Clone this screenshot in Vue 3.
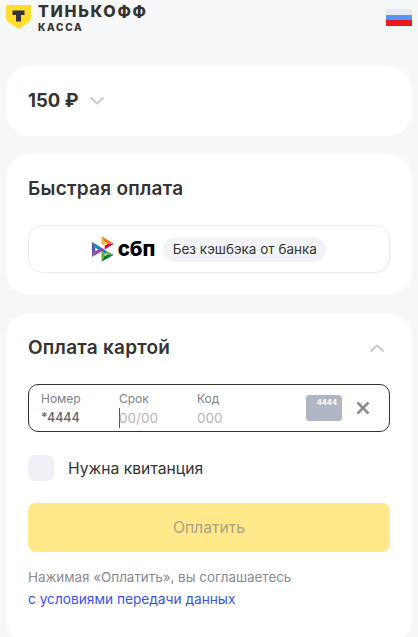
<script setup>
const amount = '150 ₽'
const fields = [
  { label: 'Номер', value: '*4444', cls: 'number' },
  { label: 'Срок', value: '00/00', cls: 'expiry' },
  { label: 'Код', value: '000', cls: 'code' }
]
</script>

<template>
  <div class="page">
    <header class="header">
      <div class="brand">
        <svg class="shield" width="25" height="24" viewBox="0 0 25 24">
          <path d="M0 0H25V12C25 15.500 23.500 17 21 18.500L12.500 24L4 18.500C1.500 17 0 15.500 0 12Z" fill="#ffdd2d" />
          <path d="M6.500 5.500H18.500V10H15V16.500H10V10H6.500Z" fill="#333" />
        </svg>
        <div class="brand-text">
          <div class="brand-name">ТИНЬКОФФ</div>
          <div class="brand-sub">КАССА</div>
        </div>
      </div>
      <div class="flag">
        <span class="white"></span>
        <span class="blue"></span>
        <span class="red"></span>
      </div>
    </header>

    <section class="card amount-card">
      <span class="amount">{{ amount }}</span>
      <svg class="chevron" width="16" height="10" viewBox="0 0 16 10">
        <path d="M1.500 1.500L8 7.500L14.500 1.500" fill="none" stroke="#c6c9cf" stroke-width="2" />
      </svg>
    </section>

    <section class="card fast-card">
      <h2 class="title">Быстрая оплата</h2>
      <div class="sbp-button">
        <svg class="sbp-logo" width="22" height="26" viewBox="0 0 22.500 26">
          <path d="M0 5.700L3.400 11.700V15.400L0 21.300Z" fill="#5b57a2" />
          <path d="M13 9.600L16.100 7.600H22.500L13 13.400Z" fill="#d90751" />
          <path d="M9.700 0L13 5.800V9.600L9.700 7.600Z" fill="#fab718" />
          <path d="M9.700 0L22.500 7.600H16.100L13 5.800Z" fill="#ed6f26" />
          <path d="M0 5.700L3.400 11.700L13 17.600L16.100 15.700Z" fill="#1487c9" />
          <path d="M16.100 15.700L22.400 19H16.100L13 17.600Z" fill="#63b22f" />
          <path d="M9.700 15.600L13 17.600V20L9.700 26Z" fill="#63b22f" />
          <path d="M9.700 26L13 20L16.100 19H22.400Z" fill="#017f36" />
          <path d="M0 21.300L3.400 15.400L9.700 11.600L12.800 13.400Z" fill="#984995" />
        </svg>
        <span class="sbp-word">сбп</span>
        <span class="pill">Без кэшбэка от банка</span>
      </div>
    </section>

    <section class="card pay-card">
      <div class="pay-head">
        <h2 class="title">Оплата картой</h2>
        <svg class="chevron" width="16" height="10" viewBox="0 0 16 10">
          <path d="M1.500 8.500L8 2.500L14.500 8.500" fill="none" stroke="#c6c9cf" stroke-width="2" />
        </svg>
      </div>

      <div class="card-input">
        <div v-for="f in fields" :key="f.label" class="field" :class="f.cls">
          <div class="field-label">{{ f.label }}</div>
          <div class="field-value">{{ f.value }}</div>
        </div>
        <div class="mini-card">4444</div>
        <svg class="close" width="14" height="14" viewBox="0 0 14 14">
          <path d="M1.500 1.500L12.500 12.500M12.500 1.500L1.500 12.500" stroke="#888b90" stroke-width="2.500" />
        </svg>
      </div>

      <label class="receipt">
        <span class="checkbox"></span>
        <span>Нужна квитанция</span>
      </label>

      <button class="pay-button">Оплатить</button>

      <p class="note">
        Нажимая «Оплатить», вы соглашаетесь<br />
        <span class="link">с условиями передачи данных</span>
      </p>
    </section>
  </div>
</template>

<style>
html, body {
  background: #f6f7f8;
}
</style>

<style scoped>
.page {
  height: 637px;
  overflow: hidden;
  padding: 0 6px;
  box-sizing: border-box;
  font-family: Inter, "Noto Sans", sans-serif;
  color: #333;
}

.header {
  height: 66px;
  display: flex;
  justify-content: space-between;
  align-items: flex-start;
}

.brand {
  display: flex;
  gap: 7px;
  padding-top: 5px;
}

.shield {
  display: block;
}

.brand-name {
  margin-top: -2px;
  font-size: 16px;
  line-height: 17px;
  font-weight: 800;
  letter-spacing: 1.700px;
}

.brand-sub {
  margin-top: 1px;
  font-size: 10px;
  line-height: 12px;
  font-weight: 800;
  letter-spacing: 1.700px;
}

.flag {
  width: 26px;
  margin-top: 9px;
}

.flag span {
  display: block;
  height: 5.670px;
}

.flag .white { background: #e8e9ea; }
.flag .blue { background: #4f97fb; }
.flag .red { background: #e8191f; }

.card {
  background: #fff;
  border-radius: 24px;
  padding: 0 22px;
  margin-bottom: 18px;
}

.amount-card {
  height: 70px;
  display: flex;
  align-items: center;
  gap: 11px;
}

.amount {
  position: relative;
  top: -1px;
  font-size: 18.500px;
  font-weight: 700;
}

.chevron {
  display: block;
}

.fast-card {
  height: 141px;
  padding-top: 23px;
  box-sizing: border-box;
}

.title {
  margin: 0;
  font-size: 19px;
  line-height: 24px;
  font-weight: 600;
  letter-spacing: 0.250px;
}

.sbp-button {
  margin-top: 24px;
  height: 48px;
  box-sizing: border-box;
  border: 1px solid #e9ebee;
  border-radius: 14px;
  display: flex;
  align-items: center;
  justify-content: center;
}

.sbp-logo {
  display: block;
}

.sbp-word {
  margin-left: 4px;
  font-size: 20.500px;
  font-weight: 800;
  color: #000;
  line-height: 24px;
}

.pill {
  margin-left: 8px;
  height: 25px;
  line-height: 25px;
  padding: 0 9.500px;
  border-radius: 13px;
  background: #f1f3f7;
  font-size: 13.500px;
}

.pay-card {
  height: 330px;
  box-sizing: border-box;
  padding-top: 23px;
}

.pay-head {
  display: flex;
  justify-content: space-between;
  align-items: center;
  padding-right: 5px;
}

.card-input {
  margin-top: 24px;
  height: 48px;
  border: 1px solid #333;
  border-radius: 10px;
  display: flex;
  align-items: center;
  padding: 0 19px 0 12px;
  box-sizing: border-box;
}

.field {
  flex: none;
  margin-top: 3px;
}

.number { width: 78px; }
.expiry { width: 78px; }
.code { flex: 1; }

.field-label {
  font-size: 12px;
  line-height: 16px;
  color: #808388;
}

.field-value {
  font-size: 13.500px;
  line-height: 20px;
  margin-top: 1px;
  color: #b3b5b9;
}

.number .field-value {
  color: #5f6267;
  font-size: 12.500px;
  font-weight: 500;
}

.expiry .field-value {
  border-left: 1px solid #555;
  text-indent: -1px;
  width: fit-content;
}

.mini-card {
  width: 36px;
  height: 26px;
  box-sizing: border-box;
  margin-right: 14px;
  padding: 3px 5px 0 0;
  border-radius: 4px;
  background: #b0b6c3;
  color: #fff;
  font-size: 7.500px;
  line-height: 10px;
  font-weight: 700;
  text-align: right;
}

.close {
  display: block;
}

.receipt {
  margin-top: 23px;
  display: flex;
  align-items: center;
  gap: 14px;
  font-size: 15.700px;
}

.checkbox {
  width: 26px;
  height: 26px;
  border-radius: 7px;
  background: #eef0f5;
}

.pay-button {
  display: block;
  width: 100%;
  height: 49px;
  margin-top: 22px;
  border: 0;
  border-radius: 8px;
  background: #ffe78a;
  color: #a7a287;
  font-family: inherit;
  font-size: 15.700px;
}

.note {
  margin: 14px 0 0;
  font-size: 13.400px;
  line-height: 22px;
  color: #888b91;
}

.link {
  font-size: 13.700px;
  color: #3a55e0;
}
</style>
